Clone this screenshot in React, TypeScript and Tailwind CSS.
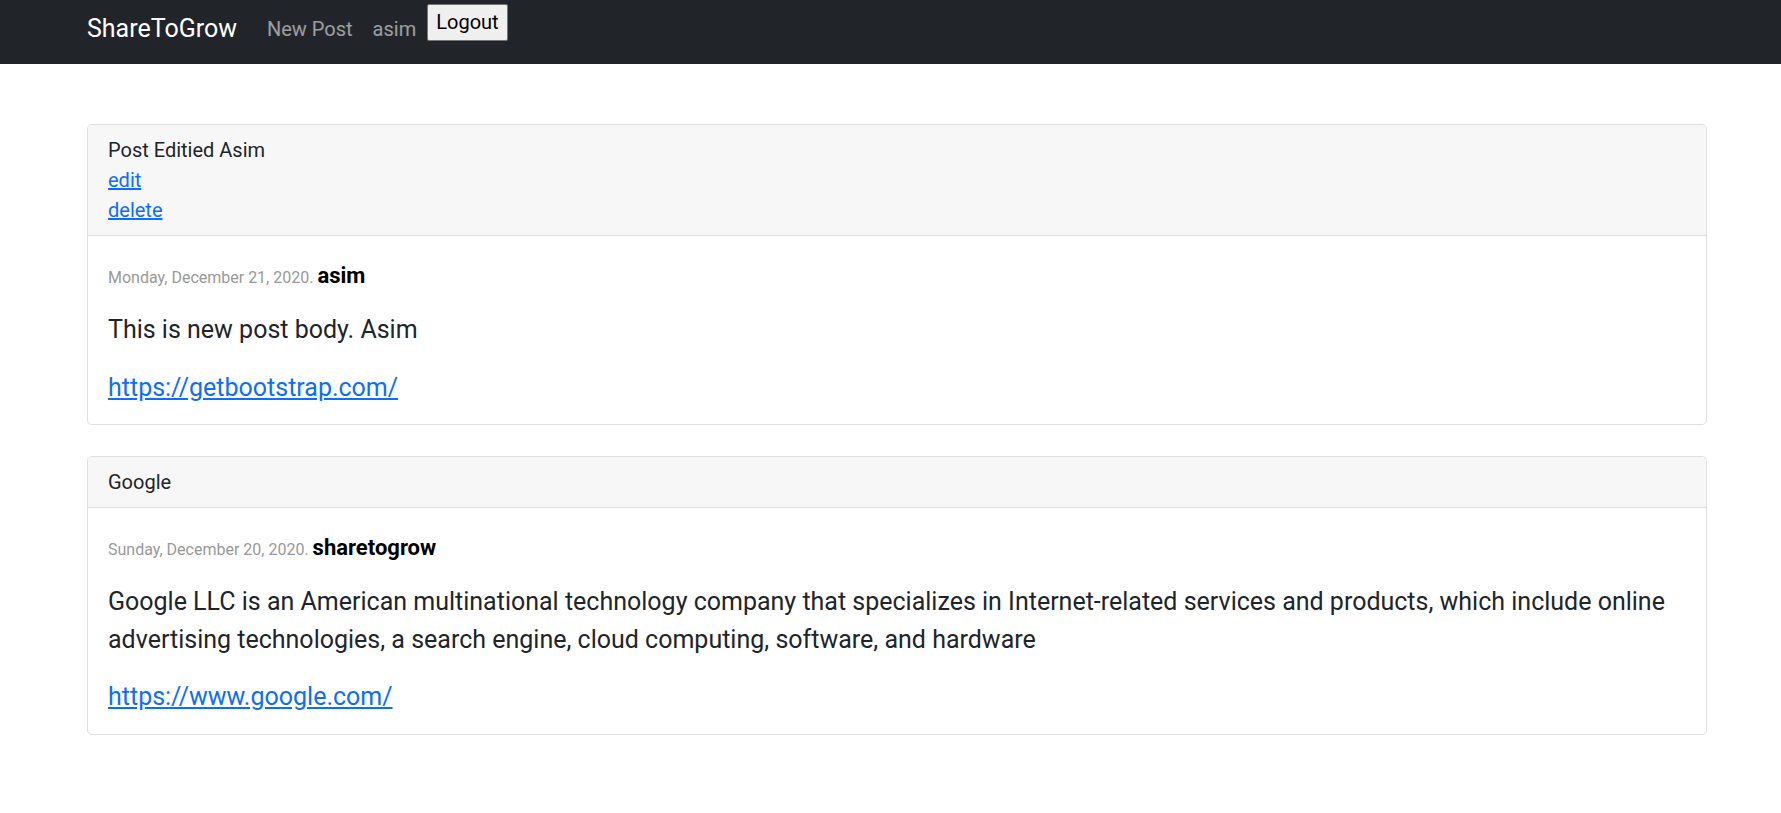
import React from 'react'

const posts = [
  {
    id: 1,
    title: 'Post Editied Asim',
    owner: true,
    date: 'Monday, December 21, 2020.',
    author: 'asim',
    body: 'This is new post body. Asim',
    url: 'https://getbootstrap.com/',
  },
  {
    id: 2,
    title: 'Google',
    owner: false,
    date: 'Sunday, December 20, 2020.',
    author: 'sharetogrow',
    body: 'Google LLC is an American multinational technology company that specializes in Internet-related services and products, which include online advertising technologies, a search engine, cloud computing, software, and hardware',
    url: 'https://www.google.com/',
  },
]

const Navbar = () => {
  return (
    <nav className="h-[64px] w-full bg-[#212529]">
      <div className="flex items-start pl-[87px] pt-[4px]">
        <a href="#" className="mt-[10px] mr-[20px] text-[25px] leading-[30px] text-white no-underline">
          ShareToGrow
        </a>
        <a href="#" className="mt-[10px] px-[10px] text-[20px] leading-[30px] text-white/55">
          New Post
        </a>
        <a href="#" className="mt-[10px] px-[10px] text-[20px] leading-[30px] text-white/55">
          asim
        </a>
        <button className="ml-[1px] h-[37px] rounded-[2px] border border-[#767676] bg-[#efefef] px-[8px] text-[20px] leading-[23px] text-black">
          Logout
        </button>
      </div>
    </nav>
  )
}

export default function App() {
  return (
    <div className="min-h-screen bg-white font-['Roboto','Liberation_Sans',sans-serif] text-[#212529]">
      <Navbar />

      <main className="pt-[60px] pl-[87px]">
        {posts.map((post) => (
          <div
            key={post.id}
            className="mb-[31px] w-[1620px] overflow-hidden rounded-[5px] border border-[#dfdfdf] bg-white"
          >
            <div className="border-b border-[#dfdfdf] bg-[#f7f7f7] px-[20px] py-[10px] text-[20px] leading-[30px]">
              <div>{post.title}</div>
              {post.owner && (
                <>
                  <div>
                    <a href="#" className="text-[#0d6efd] underline">edit</a>
                  </div>
                  <div>
                    <a href="#" className="text-[#0d6efd] underline">delete</a>
                  </div>
                </>
              )}
            </div>
            <div className="px-[20px] pt-[20px] pb-[18px]">
              <div className="mb-[18px] pt-[5px] text-[20px] leading-[30px]">
                <small className="text-[16px] text-[#999999]">{post.date} </small>
                <b className="text-[22px] font-bold text-black">{post.author}</b>
              </div>
              <p className="mb-[20px] text-[25px] leading-[37.5px]">{post.body}</p>
              <p className="text-[25px] leading-[37.5px]">
                <a href="#" className="text-[#0d6efd] underline">{post.url}</a>
              </p>
            </div>
          </div>
        ))}
      </main>
    </div>
  )
}
